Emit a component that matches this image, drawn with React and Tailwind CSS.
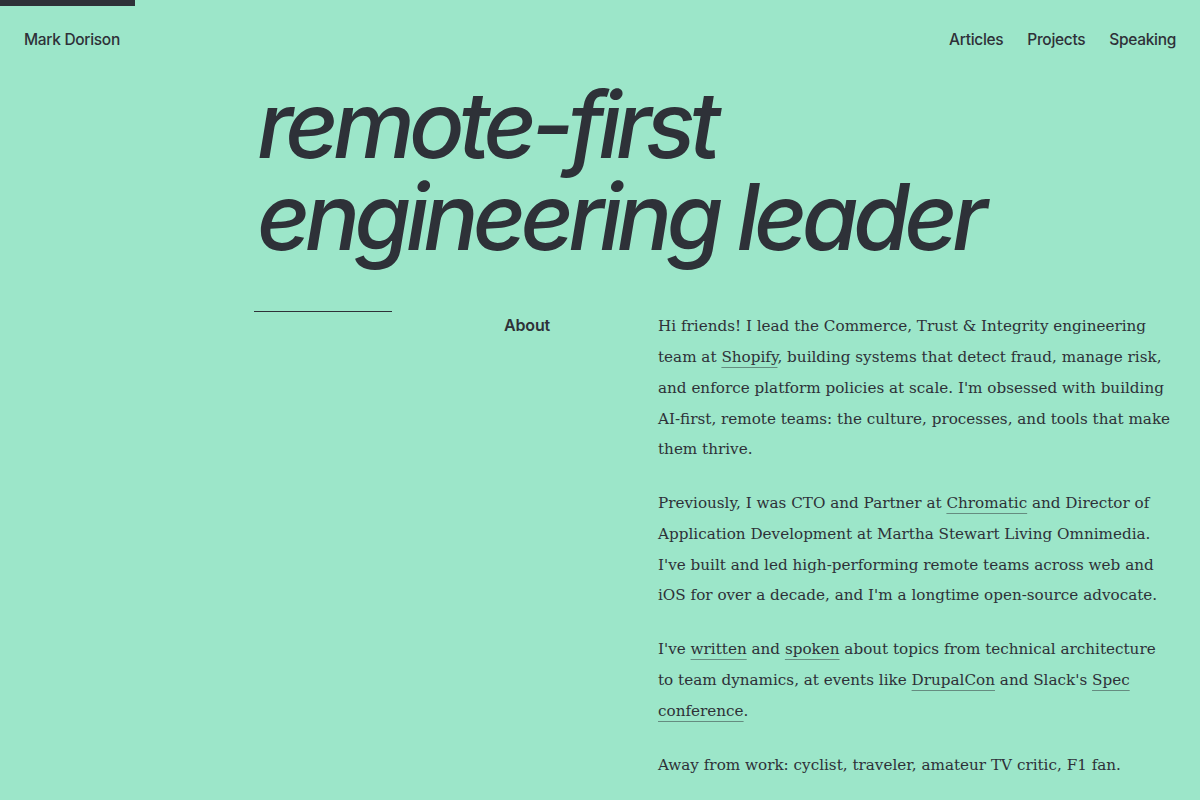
const bodyLinks = "underline decoration-[#2e3138]/50 decoration-1 underline-offset-[5px]";

function NavLink({ children }) {
  return (
    <a href="#" className="text-[15.5px] font-medium tracking-[-0.02em] text-[#2e3138]">
      {children}
    </a>
  );
}

export default function App() {
  return (
    <div className="min-h-screen bg-[#9ce6c9] text-[#2e3138] font-['Inter',sans-serif]">
      <div className="h-[6px] w-[135px] bg-[#2e3138]" />

      <header className="flex items-center justify-between px-6 pt-[22px]">
        <a href="#" className="text-[15.5px] font-medium tracking-[-0.02em]">
          Mark Dorison
        </a>
        <nav className="flex gap-6">
          <NavLink>Articles</NavLink>
          <NavLink>Projects</NavLink>
          <NavLink>Speaking</NavLink>
        </nav>
      </header>

      <main className="ml-[254px] mr-[27px]">
        <h1 className="mt-[28px] pl-[3px] text-[92px] italic font-medium leading-[92px] tracking-[-0.062em]">
          remote-first
          <br />
          engineering leader
        </h1>

        <section className="mt-[48px] flex">
          <div className="w-[250px] shrink-0">
            <div className="h-px w-[138px] bg-[#2e3138]" />
          </div>
          <h2 className="w-[154px] shrink-0 pt-[4px] text-[16px] font-semibold leading-[20px] tracking-[-0.01em]">
            About
          </h2>
          <div className="flex-1 font-['DejaVu_Serif',serif] text-[15.2px] leading-[30.75px]">
            <p className="mb-[23px]">
              Hi friends! I lead the Commerce, Trust &amp; Integrity engineering team at{" "}
              <a href="#" className={bodyLinks}>Shopify</a>, building systems that detect
              fraud, manage risk, and enforce platform policies at scale. I'm obsessed with
              building AI-first, remote teams: the culture, processes, and tools that make
              them thrive.
            </p>
            <p className="mb-[23px]">
              Previously, I was CTO and Partner at{" "}
              <a href="#" className={bodyLinks}>Chromatic</a> and Director of Application
              Development at Martha Stewart Living Omnimedia. I've built and led
              high-performing remote teams across web and iOS for over a decade, and I'm a
              longtime open-source advocate.
            </p>
            <p className="mb-[24px]">
              I've <a href="#" className={bodyLinks}>written</a> and{" "}
              <a href="#" className={bodyLinks}>spoken</a> about topics from technical
              architecture to team dynamics, at events like{" "}
              <a href="#" className={bodyLinks}>DrupalCon</a> and Slack's{" "}
              <a href="#" className={bodyLinks}>Spec conference</a>.
            </p>
            <p>Away from work: cyclist, traveler, amateur TV critic, F1 fan.</p>
          </div>
        </section>
      </main>
    </div>
  );
}
